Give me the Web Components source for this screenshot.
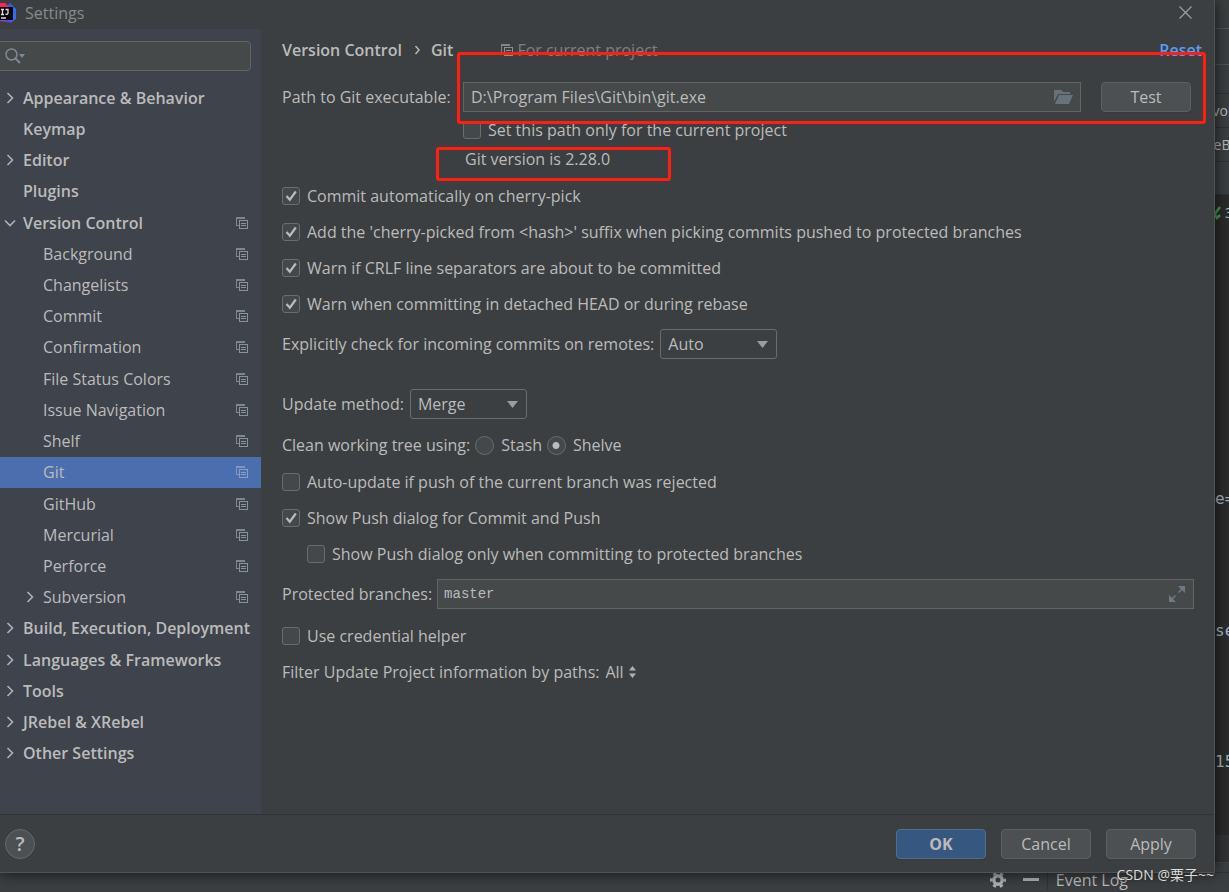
<!DOCTYPE html>
<html lang="en">
<head>
<meta charset="utf-8">
<title>Settings</title>
<style>
  html, body { margin: 0; min-height: 100%; }
  body { background: #2b2b2b; color: #bbbbbb; font: 16px/20px "Open Sans", "Noto Sans", sans-serif; overflow: hidden; }
</style>
</head>
<body>
<ide-screen></ide-screen>
<script>
const define = (name, html, setup) => {
  const template = document.createElement("template");
  template.innerHTML = html;
  customElements.define(name, class extends HTMLElement {
    connectedCallback() {
      if (this.shadowRoot) return;
      const root = this.attachShadow({ mode: "open" });
      root.append(template.content.cloneNode(true));
      if (setup) setup(this, root);
    }
  });
};

/* Two overlapping sheets: a project-level setting */
define("scope-icon", `
<style>:host{display:block;width:12px;height:12px;flex:none;color:#87939a}svg{display:block}</style>
<svg width="12" height="12" viewBox="0 0 12 12" fill="none" stroke="currentColor" shape-rendering="crispEdges">
<path d="M0.5 9V0.5H9M0 1.5H9M3 2.5V9M0 8.5H3" opacity=".85"/><rect x="3.5" y="3.5" width="8" height="8"/><path d="M5 6.5H10M5 8.5H10"/></svg>`);

define("tree-item", `
<style>
:host{display:flex;align-items:center;min-height:31px;padding:0 13px 0 4px;box-sizing:border-box}
:host([level="2"]){padding-left:24px}
:host([selected]){background:#4b6eaf}
.arrow{width:12px;height:12px;margin-right:7px;flex:none}
.arrow svg{display:none}
:host([arrow="right"]) .right,:host([arrow="down"]) .down{display:block}
.text{flex:1;min-width:0;white-space:nowrap;font-weight:600;line-height:20px}
:host([level="2"]) .text{font-weight:400}
scope-icon{display:none}
:host([scoped]) scope-icon{display:block}
:host([selected]) scope-icon{color:#8a9fc0}
</style>
<span class="arrow">
<svg class="right" width="12" height="12" fill="none" stroke="#afb1b3" stroke-width="1.6"><path d="M3.5 1L8.5 6L3.5 11"/></svg>
<svg class="down" width="12" height="12" fill="none" stroke="#afb1b3" stroke-width="1.6"><path d="M1 3.5L6 8.5L11 3.5"/></svg>
</span><span class="text"><slot></slot></span><scope-icon></scope-icon>`);

define("search-box", `
<style>
:host{display:flex;align-items:center;height:30px;margin:12px 10px 11px -4px;border:1px solid #646464;border-radius:4px;background:#45494a;box-sizing:border-box;padding-left:8px}
input{flex:1;min-width:0;background:none;border:0;outline:0;color:inherit;font:inherit;padding:0 4px}
</style>
<svg width="20" height="16" fill="none" stroke="#7f8b91" stroke-width="1.5"><circle cx="6.5" cy="6.5" r="5.5"/><path d="M10.5 10.5L15 15" stroke-width="2"/><path d="M14 6H20L17 10Z" fill="#7f8b91" stroke="none"/></svg>
<input type="text" aria-label="Search settings">`);

define("settings-tree", `
<style>
:host{display:flex;flex-direction:column;background:#3f434c;padding-bottom:45px;box-sizing:border-box;min-width:0}
nav{flex:1;display:grid;grid-template-columns:minmax(0,1fr);grid-auto-rows:1fr}
</style>
<search-box></search-box>
<nav aria-label="Settings">
<tree-item arrow="right">Appearance &amp; Behavior</tree-item>
<tree-item>Keymap</tree-item>
<tree-item arrow="right">Editor</tree-item>
<tree-item>Plugins</tree-item>
<tree-item arrow="down" scoped>Version Control</tree-item>
<tree-item level="2" scoped>Background</tree-item>
<tree-item level="2" scoped>Changelists</tree-item>
<tree-item level="2" scoped>Commit</tree-item>
<tree-item level="2" scoped>Confirmation</tree-item>
<tree-item level="2" scoped>File Status Colors</tree-item>
<tree-item level="2" scoped>Issue Navigation</tree-item>
<tree-item level="2" scoped>Shelf</tree-item>
<tree-item level="2" scoped selected>Git</tree-item>
<tree-item level="2" scoped>GitHub</tree-item>
<tree-item level="2" scoped>Mercurial</tree-item>
<tree-item level="2" scoped>Perforce</tree-item>
<tree-item level="2" scoped arrow="right">Subversion</tree-item>
<tree-item arrow="right">Build, Execution, Deployment</tree-item>
<tree-item arrow="right">Languages &amp; Frameworks</tree-item>
<tree-item arrow="right">Tools</tree-item>
<tree-item arrow="right">JRebel &amp; XRebel</tree-item>
<tree-item arrow="right">Other Settings</tree-item>
</nav>`);

/* Tick box or radio button with its label */
define("option-field", `
<style>
:host{display:block}
label{display:flex;align-items:center;gap:7px;white-space:nowrap}
input{appearance:none;margin:0;flex:none;width:18px;height:18px;border:1px solid #6b6b6b;border-radius:3px;background:#43494a center/16px no-repeat}
input[type=checkbox]:checked{background-image:url("data:image/svg+xml,%3Csvg xmlns='http://www.w3.org/2000/svg' viewBox='0 0 16 16'%3E%3Cpath d='M3.5 8L6.8 11.7L12.8 3.5' fill='none' stroke='%23bbbbbb' stroke-width='2.2'/%3E%3C/svg%3E")}
input[type=radio]{width:19px;height:19px;border-radius:50%}
input[type=radio]:checked{background-image:radial-gradient(circle,#bbbbbb 3px,transparent 4px)}
</style>
<label><input type="checkbox"><span><slot></slot></span></label>`,
(host, root) => {
  const input = root.querySelector("input");
  input.type = host.getAttribute("type") || "checkbox";
  input.checked = host.hasAttribute("checked");
});

define("select-field", `
<style>
:host{display:block}
label{display:flex;align-items:center;gap:6px;white-space:nowrap}
select{appearance:none;font:inherit;color:inherit;height:30px;padding:0 36px 0 7px;border:1px solid #6b6b6b;border-radius:3px;width:117px;
background:#3c3f41 url("data:image/svg+xml,%3Csvg xmlns='http://www.w3.org/2000/svg' width='11' height='7'%3E%3Cpath d='M0 0H11L5.5 7Z' fill='%239a9da0'/%3E%3C/svg%3E") right 8px center no-repeat}
</style>
<label><span></span><select><option></option></select></label>`,
(host, root) => {
  root.querySelector("span").textContent = host.getAttribute("label");
  root.querySelector("option").textContent = host.getAttribute("value");
});

define("push-button", `
<style>
:host{display:block}
button{font:inherit;color:inherit;width:90px;height:30px;padding:0;border:1px solid #5e6060;border-radius:4px;background:#4c5052;box-shadow:0 1px 1px #3336}
:host([primary]) button{background:#365880;border-color:#4c708c;font-weight:700}
</style><button type="button"><slot></slot></button>`);

define("red-mark", `
<style>:host{position:absolute;box-sizing:border-box;border:3px solid #ff1e12;border-radius:3px;pointer-events:none}</style>`);

define("git-settings", `
<style>
:host{display:block;padding:0 20px 0 21px;min-width:0}
.row{display:flex;align-items:center;height:36px;white-space:nowrap}
.head{height:41px;margin-bottom:9px;font-weight:600}
.crumb{margin:0 10px 0 12px}
.project{display:flex;align-items:center;gap:4px;margin-left:48px;color:#7d8082;font-weight:400}
a{margin-left:auto;margin-right:-8px;color:#589df6;text-decoration:none}
.path{position:relative}
.path label{width:181px}
.path .box{flex:1;display:flex;align-items:center;box-sizing:border-box;height:30px;min-width:0;border:1px solid #646464;background:#45494a;padding:0 7px;margin-right:20px}
.path push-button{margin-right:3px}
input{flex:1;min-width:0;border:0;outline:0;padding:0;background:none;color:inherit;font:inherit}
.path red-mark{left:175px;right:-12px;top:-27px;height:72px}
.scope{height:30px;padding-left:181px}
.version{position:relative;height:28px;padding-left:183px;margin-bottom:5px}
.version red-mark{left:154px;width:235px;top:2px;height:34px}
.tall{height:44px}
.update{margin-top:16px}
.clean{height:38px;gap:5px}
.indent{padding-left:25px}
.branches{gap:5px}
.branches .box{flex:1;display:flex;align-items:center;box-sizing:border-box;height:30px;border:1px solid #646464;background:#45494a;padding:0 8px 0 6px;font:14px/20px "Liberation Mono",monospace}
.credential{height:40px}
.filter{height:32px;gap:6px}
.filter button{display:flex;align-items:center;gap:5px;padding:0;border:0;background:none;color:inherit;font:inherit}
</style>
<div class="row head"><span>Version Control</span>
<svg class="crumb" width="7" height="12" fill="none" stroke="#bbbbbb" stroke-width="1.4"><path d="M1.5 2L5 6L1.5 10"/></svg>
<span>Git</span><span class="project"><scope-icon></scope-icon>For current project</span><a href="#reset">Reset</a></div>
<div class="row path"><label for="path">Path to Git executable:</label>
<div class="box"><input id="path" value="D:\\Program Files\\Git\\bin\\git.exe">
<svg width="19" height="15" fill="#66737a"><path d="M0 0H7L9 2H16V4H4L0 12Z"/><path d="M5 5H19L15 14H1Z"/></svg></div>
<push-button>Test</push-button><red-mark></red-mark></div>
<div class="row scope"><option-field>Set this path only for the current project</option-field></div>
<div class="row version">Git version is 2.28.0<red-mark></red-mark></div>
<div class="row"><option-field checked>Commit automatically on cherry-pick</option-field></div>
<div class="row"><option-field checked>Add the 'cherry-picked from &lt;hash&gt;' suffix when picking commits pushed to protected branches</option-field></div>
<div class="row"><option-field checked>Warn if CRLF line separators are about to be committed</option-field></div>
<div class="row"><option-field checked>Warn when committing in detached HEAD or during rebase</option-field></div>
<div class="row tall"><select-field label="Explicitly check for incoming commits on remotes:" value="Auto"></select-field></div>
<div class="row tall update"><select-field label="Update method:" value="Merge"></select-field></div>
<div class="row clean"><span>Clean working tree using:</span><option-field type="radio">Stash</option-field><option-field type="radio" checked>Shelve</option-field></div>
<div class="row"><option-field>Auto-update if push of the current branch was rejected</option-field></div>
<div class="row"><option-field checked>Show Push dialog for Commit and Push</option-field></div>
<div class="row indent"><option-field>Show Push dialog only when committing to protected branches</option-field></div>
<div class="row tall branches"><label for="branches">Protected branches:</label><div class="box"><input id="branches" value="master">
<svg width="16" height="16" fill="#6e7b82" stroke="#6e7b82" stroke-width="1.5"><path d="M9.5 6.5L13 3M6.5 9.5L3 13" fill="none"/><path d="M9 0H16V7ZM0 9V16H7Z" stroke="none"/></svg></div></div>
<div class="row credential"><option-field>Use credential helper</option-field></div>
<div class="row filter"><span>Filter Update Project information by paths:</span><button type="button">All<svg width="7" height="12" fill="#afb1b3"><path d="M0 4.5L3.5 0L7 4.5ZM0 7.5L3.5 12L7 7.5Z"/></svg></button></div>`);

define("settings-dialog", `
<style>
:host{display:grid;grid-template:29px 1fr 58px / 261px minmax(0,1fr);background:#3c3f41;border:solid #505254;border-width:0 1px 1px 0;box-sizing:border-box;box-shadow:0 0 14px #000b;min-width:0}
header{grid-column:1/3;display:flex;align-items:center;color:#888a8c;padding:0 22px 4px 0}
header span{flex:1;margin-left:8px}
.close{border:0;background:none;padding:0;display:flex}
footer{grid-column:1/3;display:flex;align-items:center;gap:15px;border-top:1px solid #323232;padding:0 18px 0 5px}
.help{margin-right:auto;width:30px;height:30px;border-radius:50%;border:1px solid #666a6c;background:#4c5052;color:#bbbbbb;padding:0;font:600 20px/24px "Open Sans",sans-serif}
</style>
<header>
<svg width="17" height="20" viewBox="0 0 17 20"><defs><linearGradient id="g"><stop offset="0" stop-color="#c22bb0"/><stop offset=".6" stop-color="#3c55ea"/><stop offset="1" stop-color="#2876f5"/></linearGradient></defs>
<path d="M0 2L7 3L10 0L16 6V16L11 19.5L0 18Z" fill="url(#g)"/><path d="M0 0H5L9 4L3 7L0 5Z" fill="#fb2559"/><rect y="4" width="13" height="13" fill="#070707"/><path d="M1 6.5H4M2.5 6.5V11.5M1 11.5H4M5.5 6.5H8V10Q8 11.5 5.5 11.2M1 15H6" fill="none" stroke="#ddd" stroke-width="1.3"/></svg>
<span>Settings</span>
<button class="close" type="button" aria-label="Close"><svg width="13" height="13" stroke="#9b9d9e" stroke-width="1.2"><path d="M.5.5L12.5 12.5M12.5.5L.5 12.5"/></svg></button>
</header>
<settings-tree></settings-tree>
<git-settings></git-settings>
<footer><button class="help" type="button" aria-label="Help">?</button>
<push-button primary>OK</push-button><push-button>Cancel</push-button><push-button>Apply</push-button></footer>`);

/* Sliver of the IDE window that stays visible right of the dialog */
define("editor-strip", `
<style>
:host{display:grid;grid-template-columns:minmax(0,1fr);grid-template-rows:29px 36px 29px 34px 34px 33px 36px 1fr 28px 10px;overflow:hidden;color:#a9b7c6;font:14px/20px "Open Sans",sans-serif}
div{background:#3c3f41;border-bottom:1px solid #2f3133;box-sizing:border-box;white-space:nowrap;overflow:hidden;display:flex;align-items:center}
.light{border-color:#555}
.tab{color:#bbb;justify-content:center}
.status{background:#2b2b2b;border:0}
.code{background:#2b2b2b;border:0;flex-direction:column;align-items:start;justify-content:space-between;font:16px/20px "DejaVu Sans Mono",monospace;padding:258px 0 63px}
.low{background:#313335;border-color:#444}
svg{flex:none}
</style>
<div class="light"></div><div class="light"></div><div></div><div class="tab">voi</div><div class="tab">eB</div><div></div>
<div class="status"><svg width="10" height="16" fill="none" stroke="#499c54" stroke-width="2.5"><path d="M-1 10L5 2M0 10L2 13L5 10"/></svg>3</div>
<div class="code"><span>e=</span><span>se</span><span>15</span></div><div class="low"></div><div></div>`);

define("status-bar", `
<style>
:host{display:flex;align-items:center;justify-content:flex-end;box-sizing:border-box;height:19px;padding:0 101px 6px 0;background:#3c3f41;color:#bbb;white-space:nowrap}
svg{flex:none}
.minus{margin-left:17px}
.bar{width:1px;height:20px;background:#303234;margin:0 8px}
</style>
<svg width="16" height="16" viewBox="0 0 16 16" fill="none" stroke="#afb1b3"><circle cx="8" cy="8" r="4.2" stroke-width="3.4"/><circle cx="8" cy="8" r="6.8" stroke-width="2.4" stroke-dasharray="3.3 3.82" stroke-dashoffset="1.65"/></svg>
<svg class="minus" width="16" height="16"><path d="M0 6H16V9H0Z" fill="#afb1b3"/></svg>
<span class="bar"></span><span>Event Log</span>`);

define("ide-screen", `
<style>
:host{display:grid;position:relative;grid-template:1fr 19px / minmax(0,1fr) 14px;min-height:100vh;overflow:hidden;background:#3c3f41}
settings-dialog{z-index:1}
status-bar{grid-column:1/3}
.mark{position:absolute;z-index:2;right:15px;bottom:7px;color:#dcdcdc;font:14px/20px "Open Sans","Noto Sans CJK SC",sans-serif;text-shadow:1px 1px 1px #333}
</style>
<settings-dialog></settings-dialog><editor-strip></editor-strip><status-bar></status-bar>
<span class="mark">CSDN @栗子~~</span>`);
</script>
</body>
</html>
